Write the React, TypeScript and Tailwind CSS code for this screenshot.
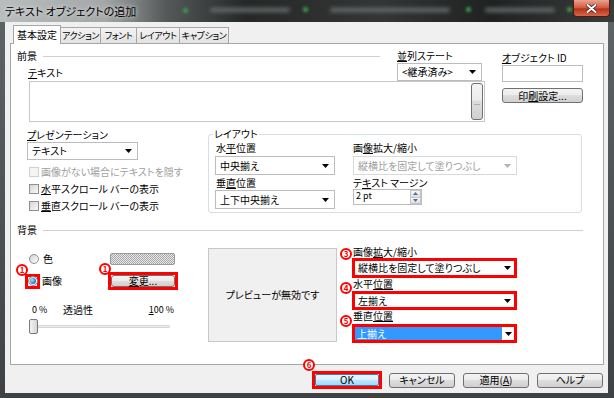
import React from "react";

const Arrow = ({ color = "#000" }: { color?: string }) => (
  <svg width="7" height="4" viewBox="0 0 7 4" className="shrink-0">
    <path d="M0 0h7L3.5 4z" fill={color} />
  </svg>
);

const Combo = ({
  children,
  className = "",
  disabled = false,
}: {
  children: React.ReactNode;
  className?: string;
  disabled?: boolean;
}) => (
  <div
    className={`flex items-center justify-between border bg-white pl-[4px] pr-[5px] ${
      disabled ? "border-[#d9d9d9] text-[#a0a0a0]" : "border-[#bcbcbc]"
    } ${className}`}
  >
    <span>{children}</span>
    <Arrow color={disabled ? "#b4b4b4" : "#000"} />
  </div>
);

const Btn = ({ children, className = "" }: { children: React.ReactNode; className?: string }) => (
  <div
    className={`flex items-center justify-center rounded-[3px] border border-[#707070] bg-[linear-gradient(#f3f3f3,#ececec_45%,#dddddd_50%,#d0d0d0)] ${className}`}
  >
    {children}
  </div>
);

const Num = ({ n, className = "" }: { n: string; className?: string }) => (
  <span
    className={`absolute flex h-[12px] w-[12px] items-center justify-center rounded-full border-2 border-[#ff0000] bg-white text-[8px] font-bold leading-none text-[#ff0000] ${className}`}
  >
    {n}
  </span>
);

const Check = ({ disabled = false }: { disabled?: boolean }) => (
  <span
    className={`h-[10px] w-[10px] shrink-0 border ${
      disabled ? "border-[#cfcfcf] bg-[#f4f4f4]" : "border-[#8e8f8f] bg-[linear-gradient(135deg,#d6d6d6,#f8f8f8)]"
    }`}
  />
);

const Radio = ({ checked = false }: { checked?: boolean }) => (
  <span className="flex h-[10px] w-[10px] shrink-0 items-center justify-center rounded-full border border-[#8e8f8f] bg-[linear-gradient(135deg,#cfcfcf,#ffffff)]">
    {checked && (
      <span className="h-[6px] w-[6px] rounded-full bg-[radial-gradient(circle_at_35%_35%,#a6e0ff,#1e74c8_70%)]" />
    )}
  </span>
);

const Line = () => <div className="ml-[6px] h-px flex-1 bg-[#cfcfcf]" />;

const Tab = ({ children, className = "" }: { children: React.ReactNode; className?: string }) => (
  <div
    className={`flex h-[16px] items-center justify-center border border-b-0 border-l-0 border-[#a6a6a6] bg-[linear-gradient(#f4f4f4,#e2e2e2)] text-[9px] tracking-[-0.4px] ${className}`}
  >
    {children}
  </div>
);

export default function App() {
  return (
    <div className="relative flex h-[398px] w-[614px] flex-col overflow-hidden whitespace-nowrap bg-[linear-gradient(#5f6466,#3e4244)] font-['Noto_Sans_CJK_JP',sans-serif] text-[10px] leading-[12px] text-black [font-feature-settings:'palt']">
      {/* title bar */}
      <div className="relative flex h-[22px] shrink-0 items-center bg-[linear-gradient(90deg,#b9bdbd_0%,#a3a7a7_17%,#55595a_27%,#262828_40%,#343636_62%,#202222_80%,#3a3c3c_100%)] pl-[5px]">
        <span className="absolute left-[183px] top-[8px] h-[5px] w-[5px] rounded-full bg-[#3fa04a] blur-[1.5px]" />
        <span className="absolute left-[303px] top-[7px] h-[5px] w-[5px] rounded-full bg-[#3fa04a] blur-[1.5px]" />
        <span className="absolute left-[466px] top-[7px] h-[5px] w-[5px] rounded-full bg-[#3fa04a] blur-[1.5px]" />
        <span className="absolute left-[567px] top-[7px] h-[5px] w-[5px] rounded-full bg-[#3fa04a] blur-[1.5px]" />
        <span className="absolute left-[210px] top-[8px] h-[4px] w-[80px] rounded-full bg-[#6a6e6e] blur-[2px]" />
        <span className="absolute left-[330px] top-[8px] h-[4px] w-[120px] rounded-full bg-[#6a6e6e] blur-[2px]" />
        <span className="absolute left-[485px] top-[8px] h-[4px] w-[70px] rounded-full bg-[#6a6e6e] blur-[2px]" />
        <span className="relative text-[11px] [text-shadow:0_0_5px_#fff]">テキスト オブジェクトの追加</span>
        <div className="absolute right-[4px] top-0 flex h-[17px] w-[37px] items-center justify-center rounded-b-[4px] border border-t-0 border-[#4a1d14] bg-[linear-gradient(#e9a491,#d0563c_50%,#b8301a_55%,#d8654a)]">
          <svg width="11" height="9" viewBox="0 0 11 9">
            <path d="M1.5 1l8 7M9.5 1l-8 7" stroke="#3a1a14" strokeWidth="3.4" strokeLinecap="round" />
            <path d="M1.5 1l8 7M9.5 1l-8 7" stroke="#fff" strokeWidth="2" strokeLinecap="round" />
          </svg>
        </div>
      </div>

      {/* client area */}
      <div className="ml-[5px] mr-[6px] flex h-[371px] flex-col bg-[#f0f0f0]">
        {/* tabs */}
        <div className="ml-[8px] flex h-[21px] items-end">
          <div className="relative z-10 -mb-px flex h-[19px] w-[48px] items-center justify-center border border-b-0 border-[#a6a6a6] bg-white">
            基本設定
          </div>
          <Tab className="w-[40px]">アクション</Tab>
          <Tab className="w-[36px]">フォント</Tab>
          <Tab className="w-[43px]">レイアウト</Tab>
          <Tab className="w-[49px]">キャプション</Tab>
        </div>

        {/* panel */}
        <div className="ml-[5px] h-[322px] w-[594px] border border-[#a6a6a6] bg-white">
          {/* foreground */}
          <div className="mt-[6px] flex">
            <div className="ml-[6px] flex w-[468px] flex-col">
              <div className="flex">
                <div className="flex w-[363px] flex-col">
                  <div className="flex h-[12px] items-center">
                    <span>前景</span>
                    <Line />
                  </div>
                  <div className="ml-[11px] mt-[5px]">
                    <u>テ</u>キスト
                  </div>
                </div>
                <div className="ml-[17px] flex w-[85px] flex-col">
                  <div>
                    <u>並</u>列ステート
                  </div>
                  <Combo className="mt-[1px] h-[18px]">&lt;継承済み&gt;</Combo>
                </div>
              </div>
              <div className="ml-[12px] flex h-[41px] w-[456px] items-center justify-end border border-[#c8c8c8] bg-white pr-[1px]">
                <Btn className="h-[37px] w-[12px] rounded-[2px] text-[7px] text-[#7a6060]">...</Btn>
              </div>
            </div>
            <div className="ml-[17px] flex w-[81px] flex-col">
              <div className="mt-[2px]">
                <u>オ</u>ブジェクト ID
              </div>
              <div className="mt-px h-[17px] border border-[#bcbcbc] bg-white" />
              <Btn className="mt-[6px] h-[15px]">
                印<u>刷</u>設定...
              </Btn>
            </div>
          </div>

          {/* presentation + layout */}
          <div className="flex items-start">
            <div className="ml-[16px] flex w-[181px] flex-col">
              <div className="mt-[7px]">
                <u>プ</u>レゼンテーション
              </div>
              <Combo className="mt-px h-[18px] w-[111px]">テキスト</Combo>
              <div className="mt-[3px] flex h-[17px] items-center gap-[2px] pl-[2px] text-[#a0a0a0]">
                <Check disabled />
                <span>画像がない場合にテキストを隠す</span>
              </div>
              <div className="flex h-[17px] items-center gap-[2px] pl-[2px]">
                <Check />
                <span>
                  <u>水</u>平スクロール バーの表示
                </span>
              </div>
              <div className="flex h-[17px] items-center gap-[2px] pl-[2px]">
                <Check />
                <span>
                  <u>垂</u>直スクロール バーの表示
                </span>
              </div>
            </div>
            <fieldset className="mt-[6px] h-[85px] w-[374px] rounded-[3px] border border-[#d5dfe5]">
              <legend className="ml-[4px] px-[1px]">レイアウト</legend>
              <div className="mt-[2px] flex">
                <div className="ml-[6px] flex w-[120px] flex-col">
                  <div className="pl-px">
                    水<u>平</u>位置
                  </div>
                  <Combo className="mt-[2px] h-[19px]">中央揃え</Combo>
                  <div className="mt-[2px] pl-px">
                    垂<u>直</u>位置
                  </div>
                  <Combo className="mt-px h-[19px]">上下中央揃え</Combo>
                </div>
                <div className="ml-[18px] flex w-[164px] flex-col">
                  <div>
                    画<u>像</u>拡大/縮小
                  </div>
                  <Combo disabled className="mt-[2px] h-[19px]">
                    縦横比を固定して塗りつぶし
                  </Combo>
                  <div className="mt-[2px]">
                    テ<u>キ</u>スト マージン
                  </div>
                  <div className="flex h-[16px] w-[69px] border border-[#bcbcbc] bg-white">
                    <span className="flex-1 pl-[2px] text-[9px] leading-[11px]">2 pt</span>
                    <div className="flex w-[11px] flex-col">
                      <div className="flex flex-1 items-center justify-center border border-[#c4c4c4] bg-[linear-gradient(#f7f7f7,#dedede)]">
                        <svg width="5" height="3" viewBox="0 0 5 3">
                          <path d="M0 3h5L2.5 0z" fill="#4c6f9c" />
                        </svg>
                      </div>
                      <div className="flex flex-1 items-center justify-center border border-t-0 border-[#c4c4c4] bg-[linear-gradient(#f7f7f7,#dedede)]">
                        <svg width="5" height="3" viewBox="0 0 5 3">
                          <path d="M0 0h5L2.5 3z" fill="#4c6f9c" />
                        </svg>
                      </div>
                    </div>
                  </div>
                </div>
              </div>
            </fieldset>
          </div>

          {/* background */}
          <div className="ml-[6px] mr-[20px] mt-[10px] flex h-[12px] items-center">
            <span>背景</span>
            <Line />
          </div>
          <div className="flex items-start">
            <div className="ml-[18px] flex w-[148px] flex-col">
              <div className="mt-[16px] flex h-[14px] items-center justify-between">
                <div className="flex items-center gap-[4px]">
                  <Radio />
                  <span>色</span>
                </div>
                <div className="mr-[2px] h-[12px] w-[65px] rounded-[2px] border border-[#9a9a9a] bg-[#d0d0d0] bg-[image:repeating-conic-gradient(#a9a9a9_0_25%,#e6e6e6_0_50%)] bg-[length:2px_2px]" />
              </div>
              <div className="mt-[6px] flex h-[18px] items-center justify-between">
                <div className="flex items-center">
                  <div className="relative -ml-[4px] flex h-[15px] w-[15px] items-center justify-center border-[3px] border-[#ff0000]">
                    <Radio checked />
                    <Num n="1" className="-left-[12px] -top-[13px]" />
                  </div>
                  <span className="ml-[2px]">画像</span>
                </div>
                <div className="relative -mr-[1px] flex h-[18px] w-[70px] border-[3px] border-[#ff0000]">
                  <Btn className="h-full w-full">
                    <u>変</u>更...
                  </Btn>
                  <Num n="1" className="-left-[12px] -top-[12px]" />
                </div>
              </div>
              <div className="mt-[14px] flex h-[12px] items-center text-[9px]">
                <span className="ml-[3px] w-[31px]">0 %</span>
                <span className="text-[10px]">透過性</span>
                <span className="ml-auto mr-[3px]">
                  <u>1</u>00 %
                </span>
              </div>
              <div className="relative mt-[3px] h-[15px] w-[141px]">
                <div className="absolute left-0 right-0 top-[6px] h-[3px] rounded-[1px] border border-[#d6d6d6] bg-[#ececec]" />
                <div className="absolute left-0 top-0 h-[15px] w-[9px] rounded-[2px] border border-[#7a7a7a] bg-[linear-gradient(90deg,#f4f4f4,#d4d4d4)]" />
              </div>
            </div>
            <div className="ml-[31px] mt-[12px] flex h-[94px] w-[129px] items-center justify-center border border-[#c8c8c8] bg-[#f0f0f0]">
              プレビューが無効です
            </div>
            <div className="ml-[15px] flex w-[165px] flex-col">
              <div className="relative mt-[10px] pl-px">
                画像<u>拡</u>大/縮小
                <Num n="3" className="-left-[12px] top-[2px]" />
              </div>
              <div className="flex h-[20px] items-center justify-between border-[3px] border-[#ff0000] bg-white pl-[3px] pr-[3px]">
                <span>縦横比を固定して塗りつぶし</span>
                <Arrow />
              </div>
              <div className="relative pl-px">
                水平<u>位置</u>
                <Num n="4" className="-left-[12px] top-[4px]" />
              </div>
              <div className="mt-px flex h-[19px] items-center justify-between border-[3px] border-[#ff0000] bg-white pl-[3px] pr-[3px]">
                <span>左揃え</span>
                <Arrow />
              </div>
              <div className="relative pl-px">
                垂直<u>位置</u>
                <Num n="5" className="-left-[12px] top-[5px]" />
              </div>
              <div className="mt-[2px] flex h-[19px] border-[3px] border-[#ff0000] bg-white">
                <span className="flex flex-1 items-center bg-[#3399ff] pl-[2px] text-white">上揃え</span>
                <span className="flex w-[12px] items-center justify-center">
                  <Arrow />
                </span>
              </div>
            </div>
          </div>
        </div>

        {/* buttons */}
        <div className="mr-[5px] mt-[6px] flex h-[18px] items-center justify-end">
          <div className="relative flex h-[18px] w-[70px] border-[3px] border-[#ff0000]">
            <div className="flex h-full w-full items-center justify-center rounded-[2px] border border-[#3c7fb1] bg-[linear-gradient(#eaf6fd,#d9f0fc_50%,#bee6fd_50%,#a7d9f5)]">
              OK
            </div>
            <Num n="6" className="-left-[12px] -top-[15px]" />
          </div>
          <Btn className="ml-[7px] h-[15px] w-[66px]">キャンセル</Btn>
          <Btn className="ml-[8px] h-[15px] w-[66px]">
            適用(<u>A</u>)
          </Btn>
          <Btn className="ml-[8px] h-[15px] w-[66px]">ヘルプ</Btn>
        </div>
      </div>
    </div>
  );
}
